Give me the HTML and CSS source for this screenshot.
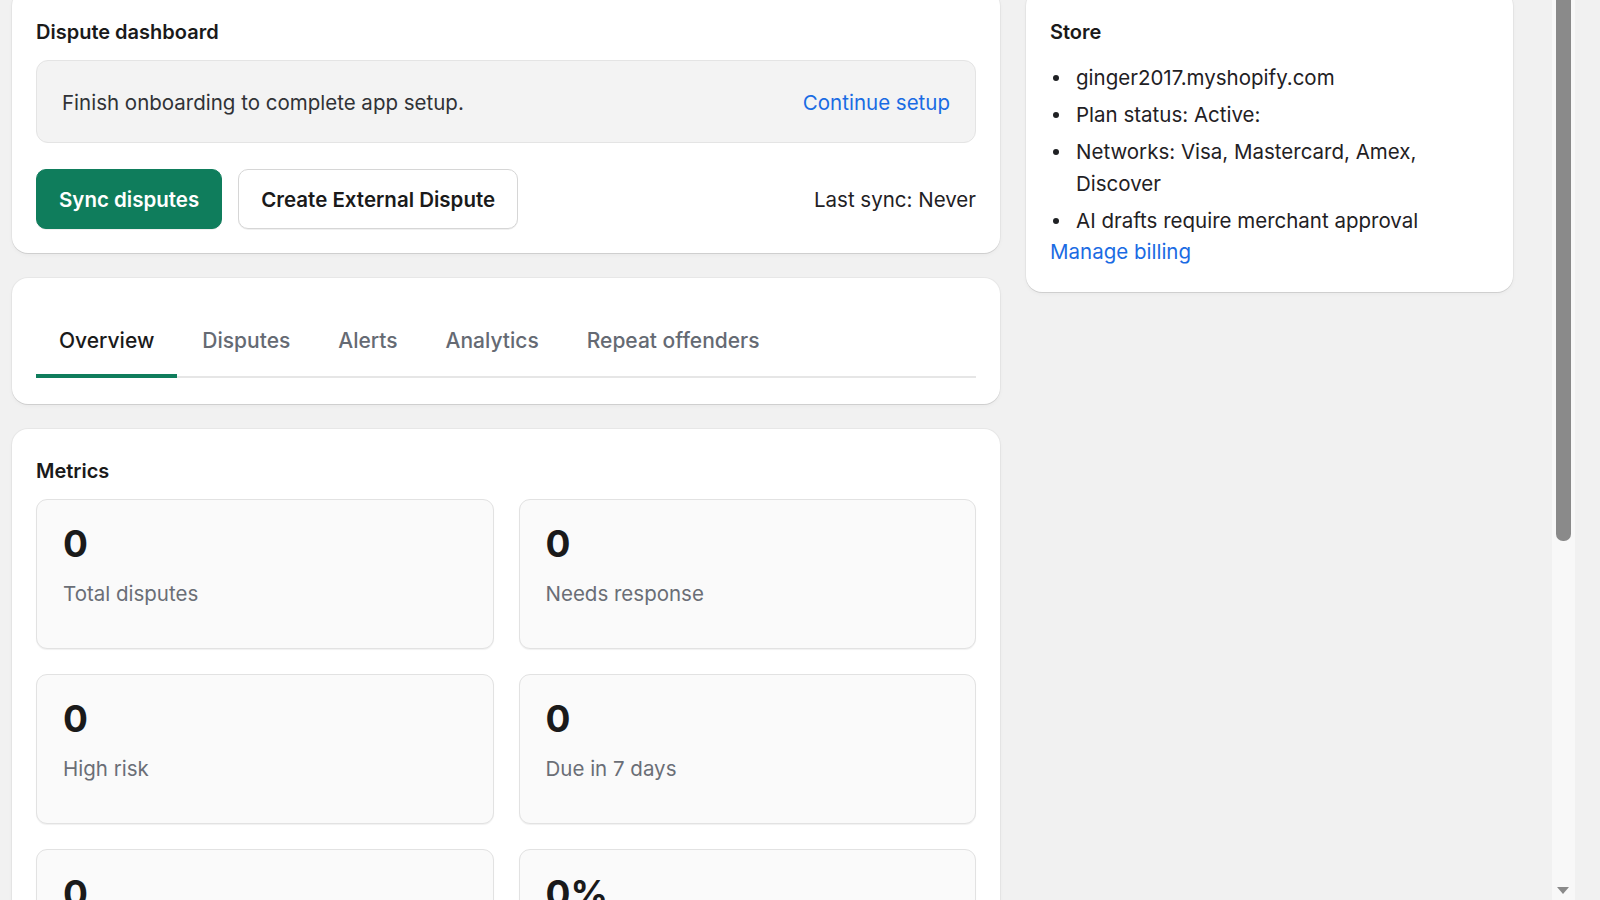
FILE: index.html
```html
<!DOCTYPE html>
<html>
<head>
  <meta charset="utf-8">
  <title>Dispute dashboard</title>
  <link rel="stylesheet" href="styles.css">
</head>
<body>
  <div class="layout">
    <div class="main-col">

      <section class="card">
        <h2 class="card-title">Dispute dashboard</h2>
        <div class="banner">
          <span>Finish onboarding to complete app setup.</span>
          <a href="#" class="link">Continue setup</a>
        </div>
        <div class="actions">
          <button class="btn btn-primary">Sync disputes</button>
          <button class="btn">Create External Dispute</button>
          <span class="last-sync">Last sync: Never</span>
        </div>
      </section>

      <section class="card card-tabs">
        <nav class="tabs">
          <a href="#" class="tab active">Overview</a>
          <a href="#" class="tab">Disputes</a>
          <a href="#" class="tab">Alerts</a>
          <a href="#" class="tab">Analytics</a>
          <a href="#" class="tab">Repeat offenders</a>
        </nav>
      </section>

      <section class="card">
        <h2 class="card-title">Metrics</h2>
        <div class="metrics">
          <div class="metric"><div class="metric-value">0</div><div class="metric-label">Total disputes</div></div>
          <div class="metric"><div class="metric-value">0</div><div class="metric-label">Needs response</div></div>
          <div class="metric"><div class="metric-value">0</div><div class="metric-label">High risk</div></div>
          <div class="metric"><div class="metric-value">0</div><div class="metric-label">Due in 7 days</div></div>
          <div class="metric"><div class="metric-value">0</div><div class="metric-label">Won disputes</div></div>
          <div class="metric"><div class="metric-value">0%</div><div class="metric-label">Win rate</div></div>
        </div>
      </section>

      <section class="card">
        <h2 class="card-title">Recent disputes</h2>
        <p class="empty">No disputes yet. Sync disputes to load them from Shopify Payments.</p>
      </section>

    </div>

    <aside class="side-col">
      <section class="card">
        <h2 class="card-title">Store</h2>
        <ul class="store-list">
          <li>ginger2017.myshopify.com</li>
          <li>Plan status: Active:</li>
          <li>Networks: Visa, Mastercard, Amex, Discover</li>
          <li>AI drafts require merchant approval</li>
        </ul>
        <a href="#" class="link billing-link">Manage billing</a>
      </section>
    </aside>
  </div>

  <div class="scrollbar">
    <div class="scrollbar-thumb"></div>
    <span class="scrollbar-arrow"></span>
  </div>
</body>
</html>
```

FILE: styles.css
```css
html, body {
  margin: 0;
  padding: 0;
  height: 100%;
  overflow: hidden;
}

body {
  background-color: #f1f1f1;
  font-family: "Inter", "Liberation Sans", sans-serif;
  font-size: 20.5px;
  color: #1f2124;
}

.layout {
  display: grid;
  grid-template-columns: 988px 487px;
  gap: 26px;
  align-items: start;
  padding: 0 12px;
  margin-top: -10px;
}

.main-col {
  display: flex;
  flex-direction: column;
  gap: 25px;
}

.card {
  background-color: #fff;
  border-radius: 16px;
  padding: 28px 24px 24px;
  box-shadow: 0 1px 0 rgba(0, 0, 0, 0.08), 0 0 0 1px rgba(0, 0, 0, 0.035), 0 2px 4px rgba(0, 0, 0, 0.04);
}

.card-title {
  margin: 0 0 14px;
  font-size: 20px;
  line-height: 28px;
  font-weight: 600;
  color: #1a1a1a;
}

.link {
  color: #1a6be3;
  text-decoration: none;
}

.banner {
  display: flex;
  justify-content: space-between;
  align-items: center;
  padding: 26px 25px 24px;
  line-height: 31px;
  background-color: #f3f3f3;
  border: 1px solid #e4e4e4;
  border-radius: 12px;
  color: #303236;
}

.actions {
  display: flex;
  align-items: center;
  gap: 16px;
  margin-top: 26px;
}

.btn {
  height: 60px;
  padding: 0 22px;
  font-family: inherit;
  font-size: 20.5px;
  font-weight: 600;
  color: #1a1a1a;
  background-color: #fff;
  border: 1.5px solid #d6d6d6;
  border-radius: 10px;
  box-shadow: 0 1px 0 rgba(0, 0, 0, 0.06);
  cursor: pointer;
}

.btn-primary {
  background-color: #0f7d5c;
  border-color: #0f7d5c;
  color: #fff;
}

.last-sync {
  margin-left: auto;
  color: #1f2124;
}

/* tabs */

.card-tabs {
  padding-bottom: 26px;
}

.tabs {
  display: flex;
  gap: 2px;
  border-bottom: 2px solid #e6e6e6;
}

.tab {
  display: flex;
  align-items: center;
  box-sizing: border-box;
  height: 72px;
  padding: 0 23px;
  margin-bottom: -2px;
  border-bottom: 4px solid transparent;
  font-size: 21px;
  font-weight: 500;
  color: #656a73;
  text-decoration: none;
}

.tab.active {
  color: #1a1a1a;
  border-bottom-color: #0f7d5c;
}

/* metrics */

.metrics {
  display: grid;
  grid-template-columns: 1fr 1fr;
  gap: 25px;
}

.metric {
  min-height: 150px;
  box-sizing: border-box;
  padding: 21px 26px;
  background-color: #fafafa;
  border: 1.5px solid #e2e2e2;
  border-radius: 11px;
  box-shadow: 0 1px 1px rgba(0, 0, 0, 0.06);
}

.metric-value {
  font-size: 37px;
  line-height: 46px;
  font-weight: 700;
  color: #1a1a1a;
}

.metric-label {
  margin-top: 13px;
  line-height: 28px;
  color: #6a6e76;
}

.empty {
  margin: 0;
  color: #6a6e76;
  min-height: 320px;
}

/* store */

.store-list {
  margin: 16px 0 0;
  padding: 0;
  list-style: none;
}

.store-list li {
  position: relative;
  padding-left: 26px;
  line-height: 32px;
  margin-bottom: 5px;
}

.store-list li::before {
  content: "";
  position: absolute;
  left: 3px;
  top: 13px;
  width: 6px;
  height: 6px;
  border-radius: 50%;
  background-color: #1f2124;
}

.store-list li:last-child {
  margin-bottom: 0;
}

.billing-link {
  display: block;
  line-height: 30px;
}

.side-col .card {
  padding-bottom: 25px;
}

/* fake window scrollbar */

.scrollbar {
  position: fixed;
  top: 0;
  bottom: 0;
  left: 1552px;
  width: 23px;
  background-color: #f8f8f8;
}

.scrollbar-thumb {
  margin: 0 4px;
  height: 541px;
  background-color: #8a8a8a;
  border-radius: 0 0 7px 7px;
}

.scrollbar-arrow {
  position: absolute;
  left: 5px;
  bottom: 6px;
  border-left: 6.5px solid transparent;
  border-right: 6.5px solid transparent;
  border-top: 7px solid #8a8a8a;
}
```
